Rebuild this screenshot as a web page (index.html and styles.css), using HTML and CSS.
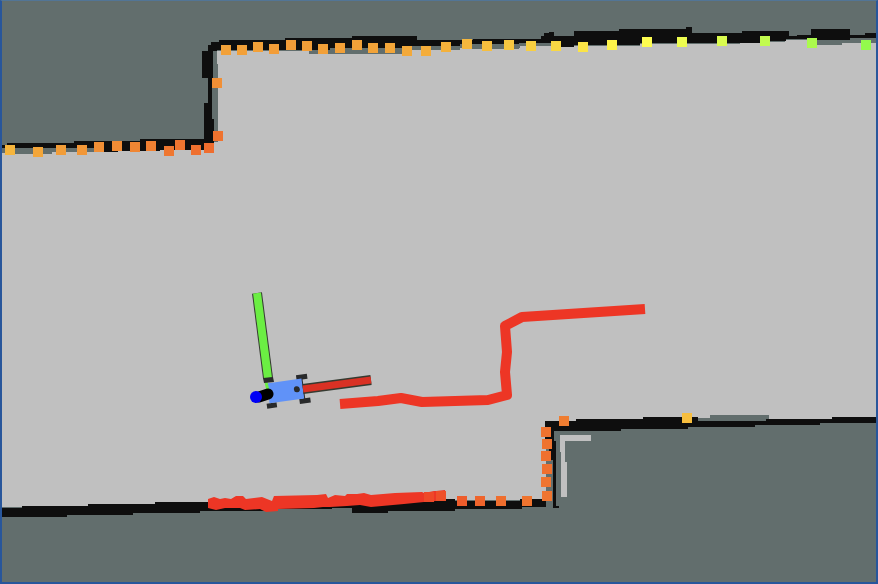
FILE: index.html
```html
<!DOCTYPE html>
<html lang="en">
<head>
<meta charset="utf-8">
<meta name="viewport" content="width=device-width, initial-scale=1">
<link rel="stylesheet" href="styles.css">
</head>
<body>
<main class="viewer">
<svg class="map" viewBox="2 1 874 581" aria-hidden="true">
  <!-- unexplored space and free floor -->
  <rect class="unknown" x="0" y="0" width="878" height="584"/>
  <path class="floor" d="M0 153H52V152H95V151H150V150H212V142H218V132H213V112H218V64H217V51H310V49H440V48H520V46H640V44H740V42H785V40H876V421H770V424H548V500H450V502H350V504H190V507H0Z"/>

  <!-- patches of unexplored cells beside the walls -->
  <path class="unknown" d="M5 148H52V154H5ZM60 147H92V152H60ZM213 112H218V142H213ZM213 51H217V64H218V78H213ZM309 48H410V54H309ZM410 47H460V50H410ZM470 44H519V49H470ZM807 40H842V45H807ZM842 40H876V43H842ZM710 415H769V422H698V418H710ZM546 425H552V508H546Z"/>

  <!-- upper walls -->
  <path class="wall" d="M2 145H7V143H74V141H140V139H204V103H208V78H202V51H208V45H211V42H219V40H285V38H352V36H417V40H473V39H541V36H544V33H549V32H554V36H574V31H619V29H686V27H692V33H742V31H789V36H797V35H811V29H850V35H865V33H876V38H850V40H811V39H786V41H770V43H640V45H574V47H560V43H519V44H460V46H410V48H330V50H217V51H213V78H212V119H214V150H160V151H118V152H100V148H25V154H25V148H2Z"/>

  <!-- lower right wall -->
  <path class="wall" d="M545 421H576V419H643V417H698V421H766V419H832V417H876V423H820V425H755V427H688V429H621V431H554V441H556V506H559V508H553V460H549V441H545Z"/>
  <path class="track" d="M560 435H591V441H565V462H567V497H561V452H560Z"/>

  <!-- lower left wall -->
  <path class="wall" d="M2 508H22V506H88V504H155V502H210V501H340V499H455V501H520V499H546V507H522V509H455V511H388V513H352V508H332V509H265V511H200V513H133V515H67V517H2Z"/>

  <!-- laser hits packed along the lower wall -->
  <path class="hits" d="M208 499L214 497 220 499 225 498 231 499 236 496 243 496 246 499 262 497 267 499 272 501 274 496 317 495 326 494 328 498 335 495 345 496 347 494 357 494 364 493 371 495 395 493 422 492 424 493 434 491 436 491 445 490 446 500 436 501 424 502 404 504 371 507 360 505 347 506 330 507 323 507 314 508 278 509 278 511 266 512 260 509 245 510 240 508 225 508 216 510 208 508Z"/>

  <g id="scan"></g>

  <!-- planned path -->
  <path class="plan" d="M340 404L378 401 401 398 422 402 488 400 507 395 505 372 507 352 505 326 522 317 645 309"/>

  <!-- robot pose: axes, body and wheels -->
  <g transform="translate(285 391) rotate(-8)">
    <path class="wheel" d="M-20 10h10v5h-10ZM13 10h11v5H13ZM13 -14h11v5H13Z"/>
    <path class="joint" d="M18 -10V12"/>
    <rect class="chassis" x="-17" y="-10" width="35" height="20"/>
    <circle class="wheel" cx="12" cy="0" r="3"/>
  </g>
  <path class="axis-edge" d="M303 389L371 380"/>
  <path class="axis-x" d="M303 389L371 380"/>
  <path class="axis-edge" d="M257 293L268 378"/>
  <path class="axis-y" d="M257 293L268 378"/>
  <path class="link" d="M266 382L268 391"/>
  <path class="wheel" d="M263 378L273 377 274 382 264 383Z"/>
  <path class="origin" d="M259 397L268 394"/>
  <circle class="axis-z" cx="256" cy="397" r="6"/>
</svg>
</main>
<script src="scan.js"></script>
</body>
</html>
```
FILE: styles.css
```css
body {
  margin: 0;
  background: #626e6d;
}

.viewer {
  box-sizing: border-box;
  border: 2px solid #28569b;
  border-top: 1px solid #527596;
}

.map {
  display: block;
  width: 100%;
  height: auto;
}

.unknown { fill: #626e6d; }
.floor, .track { fill: #c0c0c0; }
.wall { fill: #0e0e0e; }
.hits { fill: #ed3625; }

.plan {
  fill: none;
  stroke: #ed3625;
  stroke-width: 10;
  stroke-linejoin: round;
}

.wheel { fill: #292a2b; }
.chassis { fill: #6092f8; }

.joint {
  stroke: #292a2b;
  stroke-width: 2;
}

.axis-edge {
  stroke: #353a30;
  stroke-width: 10;
}

.axis-x {
  stroke: #d93124;
  stroke-width: 7;
}

.axis-y {
  stroke: #6bee43;
  stroke-width: 8;
}

.link {
  stroke: #6bee43;
  stroke-width: 3;
}

.origin {
  stroke: #000;
  stroke-width: 11;
  stroke-linecap: round;
}

.axis-z { fill: #0000f5; }
```
FILE: scan.js
```js
// Laser returns as [centre x, centre y, colour], in map units.
const returns = [
  [10, 150, "#f6b53c"], [38, 152, "#f3a63a"], [61, 150, "#f29d38"], [82, 150, "#f29737"],
  [99, 147, "#f18f35"], [117, 146, "#f18c35"], [135, 147, "#f08633"], [151, 146, "#f08032"],
  [169, 151, "#ef7730"], [180, 145, "#ef7530"], [196, 150, "#ef702f"], [209, 148, "#ef6d2e"],
  [218, 136, "#ef732f"], [217, 83, "#f18f35"],
  [226, 50, "#f2a139"], [242, 50, "#f2a038"], [258, 47, "#f2a038"], [274, 49, "#f29d38"],
  [291, 45, "#f29d38"], [307, 46, "#f29e38"], [323, 49, "#f2a038"], [340, 48, "#f2a038"],
  [357, 45, "#f2a139"], [373, 48, "#f2a339"], [390, 48, "#f3a639"], [407, 51, "#f3a93a"],
  [426, 51, "#f4ad3b"], [446, 47, "#f4b13b"], [467, 44, "#f5b73d"], [487, 46, "#f6be3e"],
  [509, 45, "#f7c740"], [531, 46, "#f8cf41"], [556, 46, "#f9d844"], [583, 47, "#fbe447"],
  [612, 45, "#fdf34a"], [647, 42, "#fdfc50"], [682, 42, "#edfc50"], [722, 41, "#dafb4f"],
  [765, 41, "#c2fb4e"], [812, 43, "#abfa4d"], [866, 45, "#93fa4c"],
  [564, 421, "#ef7d31"], [687, 418, "#f7be3e"],
  [546, 432, "#ef732f"], [547, 444, "#ef732f"], [546, 456, "#ef702f"], [547, 469, "#ef702f"],
  [546, 482, "#ef7530"], [547, 496, "#ef7530"],
  [527, 501, "#ef742f"], [501, 501, "#ef6e2e"], [480, 501, "#ef642c"], [462, 501, "#ee5c2b"],
  [441, 496, "#ee4f29"], [429, 497, "#ee4828"]
];

const scan = document.getElementById("scan");
for (const [x, y, colour] of returns) {
  const cell = document.createElementNS("http://www.w3.org/2000/svg", "rect");
  cell.setAttribute("x", x - 5);
  cell.setAttribute("y", y - 5);
  cell.setAttribute("width", 10);
  cell.setAttribute("height", 10);
  cell.setAttribute("fill", colour);
  scan.append(cell);
}
```
